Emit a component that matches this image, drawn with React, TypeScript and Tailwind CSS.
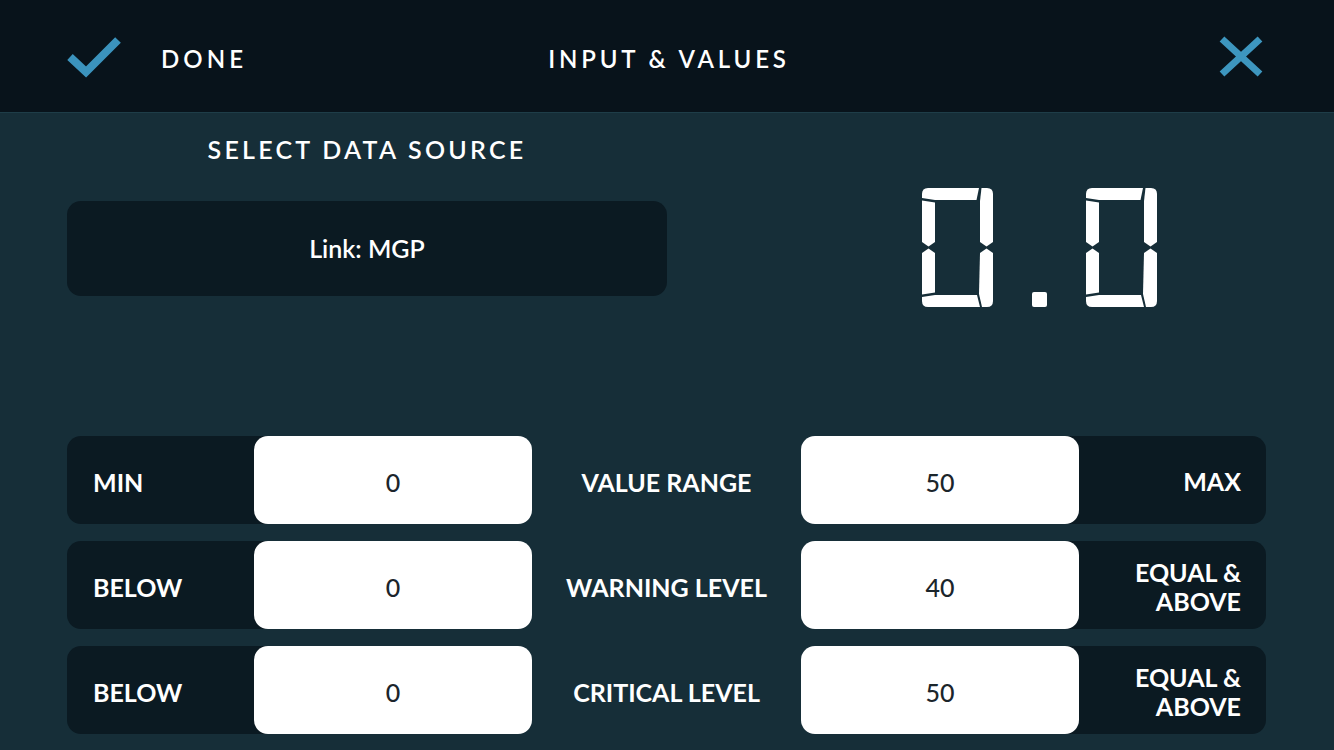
import React from "react";

function Digit() {
  return (
    <svg width="71" height="119" viewBox="0 0 71 119" fill="#ffffff">
      {/* top */}
      <path d="M0 10 V6 Q0 0 6 0 H57 L54.5 12 H13 Z" />
      {/* upper left */}
      <path d="M0 12.5 L13 14.5 V54 L6.5 58.5 L0 54 Z" />
      {/* lower left */}
      <path d="M0 65 L6.5 60.5 L13 65 V104.5 L0 106.5 Z" />
      {/* bottom */}
      <path d="M0 109 L13 107 H55 L58 119 H6 Q0 119 0 113 Z" />
      {/* upper right */}
      <path d="M59.5 0 H65 Q71 0 71 6 V54 L64.5 58.5 L58 54 V13 Z" />
      {/* lower right */}
      <path d="M58 65 L64.5 60.5 L71 65 V113 Q71 119 65 119 H60 L57 106 Z" />
    </svg>
  );
}

function Row({
  left,
  leftValue,
  middle,
  rightValue,
  right,
}: {
  left: string;
  leftValue: string;
  middle: string;
  rightValue: string;
  right: React.ReactNode;
}) {
  return (
    <div className="flex h-[88px] items-stretch">
      <div className="flex w-[465px] items-stretch">
        <div className="flex w-[208px] items-center rounded-l-[14px] bg-[#0b1a22] pl-[26px] pt-[5px] text-[25px] font-bold text-white">
          {left}
        </div>
        <div className="-ml-[21px] flex w-[278px] items-center justify-center rounded-[14px] bg-white pt-[5px] text-[25px] font-medium text-[#1b252b]">
          {leftValue}
        </div>
      </div>
      <div className="flex w-[269px] items-center justify-center pt-[5px] text-[25px] font-bold text-white">
        {middle}
      </div>
      <div className="flex w-[465px] items-stretch">
        <div className="relative z-10 flex w-[278px] items-center justify-center rounded-[14px] bg-white pt-[5px] text-[25px] font-medium text-[#1b252b]">
          {rightValue}
        </div>
        <div className="-ml-[21px] flex flex-1 items-center justify-end rounded-r-[14px] bg-[#0b1a22] pr-[25px] pt-[3px] text-right text-[25px] font-bold leading-[29px] text-white">
          {right}
        </div>
      </div>
    </div>
  );
}

export default function App() {
  return (
    <div className="h-[750px] w-[1334px] overflow-hidden bg-[#162e38] font-['Lato',sans-serif]">
      {/* header */}
      <div className="grid h-[112px] grid-cols-[1fr_auto_1fr] items-center bg-[#08131b] pl-[62px] pr-[67px]">
        <div className="flex items-center gap-[37px]">
          <svg width="62" height="48" viewBox="0 0 62 48" fill="none">
            <path d="M8 25 L24 40 L56 8" stroke="#3b93bd" strokeWidth="8" strokeLinejoin="miter" />
          </svg>
          <span className="pt-[6px] text-[24px] font-semibold tracking-[0.17em] text-white">DONE</span>
        </div>
        <div className="pl-[9px] pt-[6px] text-[24px] font-semibold tracking-[0.16em] text-white">INPUT &amp; VALUES</div>
        <div className="flex justify-end">
          <svg width="52" height="48" viewBox="0 0 52 48" fill="none">
            <path d="M7 7 L45 42 M45 7 L7 42" stroke="#3d96bf" strokeWidth="7" />
          </svg>
        </div>
      </div>

      {/* body */}
      <div className="flex h-[638px] flex-col border-t border-[#1e3d48] px-[67px] pb-[16px] pt-[21px]">
        <div className="flex items-start">
          <div className="flex w-[600px] flex-col items-center">
            <div className="text-[25px] font-semibold leading-[30px] tracking-[0.13em] text-white">
              SELECT DATA SOURCE
            </div>
            <div className="mt-[37px] flex h-[95px] w-full items-center justify-center rounded-[14px] bg-[#0b1a22] text-[25px] font-semibold text-white">
              Link: MGP
            </div>
          </div>
          <div className="ml-[255px] mt-[54px] flex items-end">
            <Digit />
            <div className="ml-[39px] h-[15px] w-[15px] rounded-[2px] bg-white" />
            <div className="ml-[39px]">
              <Digit />
            </div>
          </div>
        </div>

        <div className="flex-1" />

        <div className="flex flex-col gap-[17px]">
          <Row left="MIN" leftValue="0" middle="VALUE RANGE" rightValue="50" right="MAX" />
          <Row
            left="BELOW"
            leftValue="0"
            middle="WARNING LEVEL"
            rightValue="40"
            right={
              <span>
                EQUAL &amp;
                <br />
                ABOVE
              </span>
            }
          />
          <Row
            left="BELOW"
            leftValue="0"
            middle="CRITICAL LEVEL"
            rightValue="50"
            right={
              <span>
                EQUAL &amp;
                <br />
                ABOVE
              </span>
            }
          />
        </div>
      </div>
    </div>
  );
}
